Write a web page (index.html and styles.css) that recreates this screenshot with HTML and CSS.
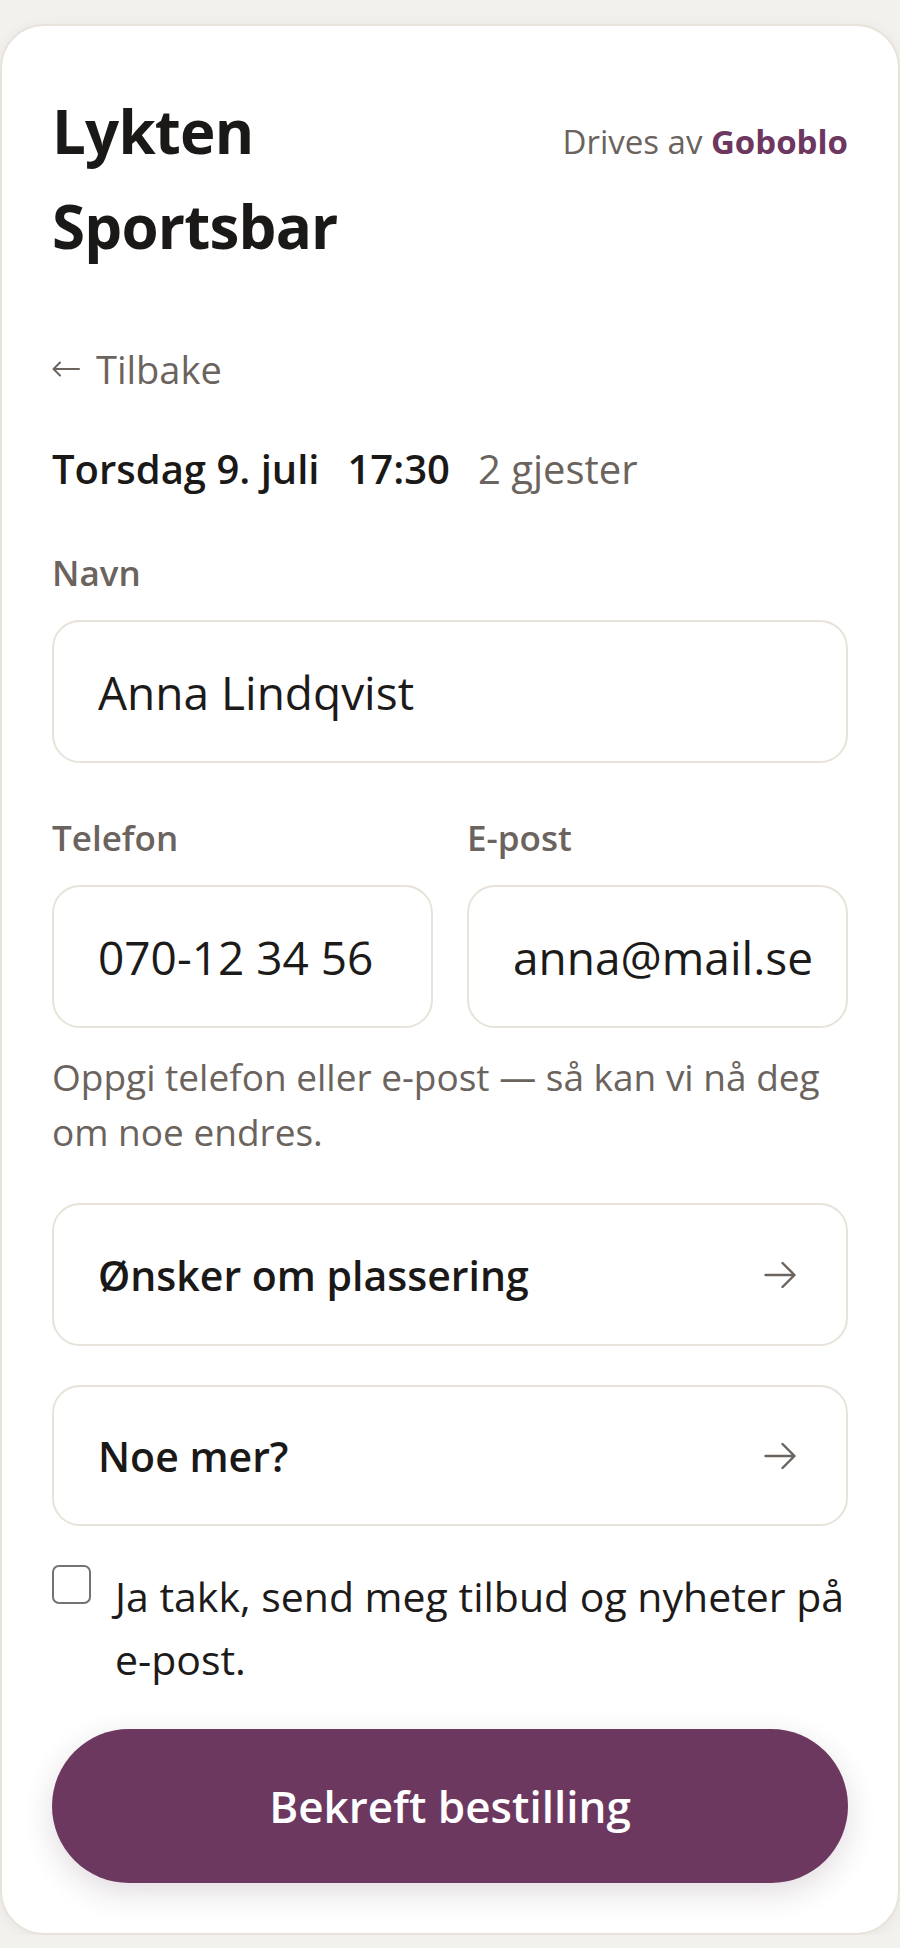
FILE: index.html
```html
<!DOCTYPE html>
<html lang="no">
<head>
<meta charset="utf-8">
<title>Lykten Sportsbar – Bestilling</title>
<link rel="stylesheet" href="styles.css">
</head>
<body>
<main class="card">
  <header class="head">
    <h1 class="title">Lykten Sportsbar</h1>
    <p class="powered">Drives av <strong class="brand">Goboblo</strong></p>
  </header>

  <a class="back" href="#">
    <svg class="back-icon" width="28" height="16" viewBox="0 0 28 16" aria-hidden="true">
      <path d="M27 8H2M8 1.5L1.5 8L8 14.5" fill="none" stroke="currentColor" stroke-width="2" stroke-linecap="round" stroke-linejoin="round"/>
    </svg>
    <span>Tilbake</span>
  </a>

  <p class="summary">
    <span class="strong">Torsdag 9. juli</span>
    <span class="strong">17:30</span>
    <span class="muted">2 gjester</span>
  </p>

  <div class="field">
    <label class="label" for="navn">Navn</label>
    <input class="input" id="navn" type="text" value="Anna Lindqvist">
  </div>

  <div class="row">
    <div class="field">
      <label class="label" for="tel">Telefon</label>
      <input class="input" id="tel" type="tel" value="070-12 34 56">
    </div>
    <div class="field">
      <label class="label" for="epost">E-post</label>
      <input class="input" id="epost" type="email" value="anna@mail.se">
    </div>
  </div>

  <p class="help">Oppgi telefon eller e-post — så kan vi nå deg om noe endres.</p>

  <button class="option" type="button">
    <span>Ønsker om plassering</span>
    <svg class="chev" width="32" height="28" viewBox="0 0 32 28" aria-hidden="true">
      <path d="M1.5 14H30M18.5 2L30.5 14L18.5 26" fill="none" stroke="currentColor" stroke-width="2.4" stroke-linecap="round" stroke-linejoin="round"/>
    </svg>
  </button>

  <button class="option option-2" type="button">
    <span>Noe mer?</span>
    <svg class="chev" width="32" height="28" viewBox="0 0 32 28" aria-hidden="true">
      <path d="M1.5 14H30M18.5 2L30.5 14L18.5 26" fill="none" stroke="currentColor" stroke-width="2.4" stroke-linecap="round" stroke-linejoin="round"/>
    </svg>
  </button>

  <label class="consent">
    <input class="check" type="checkbox">
    <span class="consent-text">Ja takk, send meg tilbud og nyheter på e-post.</span>
  </label>

  <button class="submit" type="submit">Bekreft bestilling</button>
</main>
</body>
</html>
```

FILE: styles.css
```css
* { box-sizing: border-box; }

html, body {
  margin: 0;
  background: #f3f1ee;
}

body {
  padding-top: 24px;
  font-family: "Open Sans", "Noto Sans", "DejaVu Sans", sans-serif;
  color: #1d1b1a;
}

.card {
  display: flex;
  flex-direction: column;
  width: 100%;
  background: #ffffff;
  border: 2px solid #e8e3da;
  border-radius: 44px;
  padding: 58px 50px 50px;
  box-shadow: 0 2px 14px rgba(40, 30, 20, 0.05);
}

.head {
  display: flex;
  justify-content: space-between;
  align-items: baseline;
  gap: 24px;
}

.title {
  margin: 0;
  max-width: 420px;
  font-size: 60px;
  line-height: 95px;
  font-weight: 700;
  letter-spacing: -0.8px;
  color: #1b1918;
}

.powered {
  margin: 0;
  font-size: 33px;
  color: #6b635d;
  white-space: nowrap;
}

.brand {
  color: #6d3760;
  font-weight: 700;
}

.back {
  display: flex;
  align-items: center;
  gap: 16px;
  margin-top: 68px;
  font-size: 38px;
  line-height: 54px;
  color: #6b635d;
  text-decoration: none;
}

.back-icon { flex: none; }

.summary {
  display: flex;
  align-items: baseline;
  gap: 28px;
  margin: 44px 0 0;
  font-size: 40px;
  line-height: 58px;
}

.strong { font-weight: 600; color: #1b1918; }
.muted { color: #6b635d; }

.field {
  display: flex;
  flex-direction: column;
  gap: 20px;
  min-width: 0;
}

.summary + .field { margin-top: 48px; }

.label {
  font-size: 35px;
  line-height: 54px;
  font-weight: 600;
  color: #6b635d;
}

.input {
  width: 100%;
  height: 143px;
  padding: 0 26px 0 44px;
  border: 2px solid #e8e3da;
  border-radius: 28px;
  background: #ffffff;
  font-family: inherit;
  font-size: 46px;
  color: #1d1b1a;
  outline: none;
}

.row {
  display: grid;
  grid-template-columns: 1fr 1fr;
  gap: 34px;
  margin-top: 48px;
}

.help {
  margin: 21px 0 0;
  font-size: 37px;
  line-height: 55px;
  color: #6b635d;
}

.option {
  display: flex;
  justify-content: space-between;
  align-items: center;
  width: 100%;
  height: 143px;
  margin-top: 44px;
  padding: 0 50px 0 44px;
  border: 2px solid #e8e3da;
  border-radius: 28px;
  background: #ffffff;
  font-family: inherit;
  font-size: 41px;
  font-weight: 600;
  color: #1b1918;
  text-align: left;
  cursor: pointer;
}

.option-2 { margin-top: 39px; height: 141px; }

.chev { flex: none; color: #6b635d; }

.consent {
  display: flex;
  align-items: flex-start;
  gap: 24px;
  margin-top: 39px;
}

.check {
  appearance: none;
  -webkit-appearance: none;
  flex: none;
  width: 39px;
  height: 39px;
  margin: 0;
  border: 2.5px solid #737373;
  border-radius: 7px;
  background: #ffffff;
}

.consent-text {
  font-size: 41px;
  line-height: 63px;
  color: #1d1b1a;
}

.submit {
  width: 100%;
  height: 154px;
  margin-top: 38px;
  border: none;
  border-radius: 77px;
  background: #6d3860;
  color: #ffffff;
  font-family: inherit;
  font-size: 44px;
  font-weight: 600;
  box-shadow: 0 10px 30px rgba(70, 40, 60, 0.16);
  cursor: pointer;
}
```
